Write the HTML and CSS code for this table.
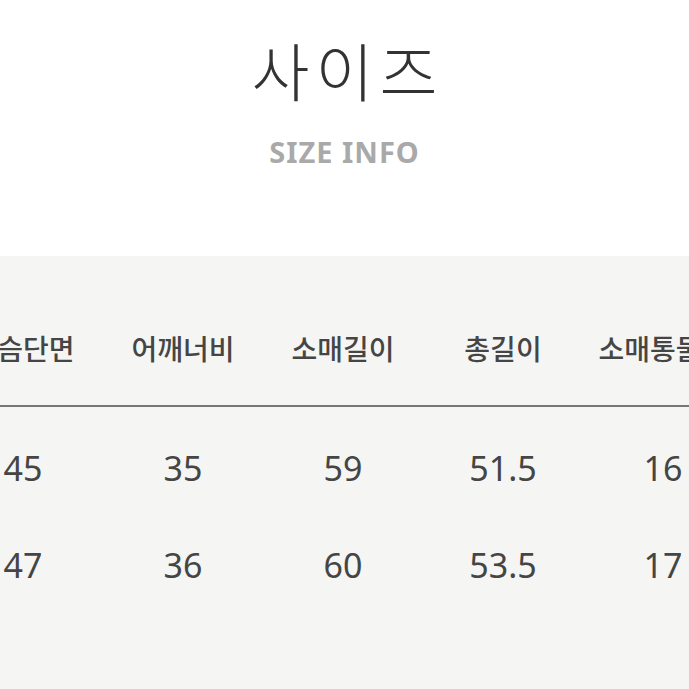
FILE: index.html
```html
<!DOCTYPE html>
<html lang="ko">
<head>
<meta charset="utf-8">
<link rel="stylesheet" href="styles.css">
</head>
<body>
<div class="page">
  <header class="head">
    <h1 class="title">사이즈</h1>
    <p class="sub">SIZE INFO</p>
  </header>
  <section class="panel">
    <div class="table">
      <div class="row hdr">
        <div class="cell">사이즈</div>
        <div class="cell">가슴단면</div>
        <div class="cell">어깨너비</div>
        <div class="cell">소매길이</div>
        <div class="cell">총길이</div>
        <div class="cell">소매통둘레</div>
      </div>
      <div class="row num r1">
        <div class="cell">S</div>
        <div class="cell">45</div>
        <div class="cell">35</div>
        <div class="cell">59</div>
        <div class="cell">51.5</div>
        <div class="cell">16</div>
      </div>
      <div class="row num r2">
        <div class="cell">M</div>
        <div class="cell">47</div>
        <div class="cell">36</div>
        <div class="cell">60</div>
        <div class="cell">53.5</div>
        <div class="cell">17</div>
      </div>
    </div>
  </section>
</div>
</body>
</html>
```

FILE: styles.css
```css
html, body {
  margin: 0;
  padding: 0;
  background: #ffffff;
}
body {
  width: 689px;
  height: 689px;
  overflow: hidden;
  font-family: "Noto Sans CJK KR", "Noto Sans", sans-serif;
}
.page {
  display: flex;
  flex-direction: column;
  height: 689px;
}
.head {
  display: flex;
  flex-direction: column;
  align-items: center;
  padding-top: 27px;
  height: 222px;
  box-sizing: border-box;
}
.title {
  margin: 0;
  padding-left: 6px;
  font-family: "Noto Sans CJK KR", sans-serif;
  font-weight: 300;
  font-size: 63px;
  line-height: 84px;
  color: #333333;
  letter-spacing: 6px;
}
.sub {
  margin: 24px 0 0;
  font-family: "Noto Sans", "Open Sans", sans-serif;
  font-weight: 700;
  font-size: 29px;
  line-height: 34px;
  color: #a9a9a9;
  letter-spacing: 1px;
}
.panel {
  margin-top: 34px;
  flex: 1;
  background: #f5f5f4;
  overflow: hidden;
}
.table {
  margin-left: -217px;
  width: 960px;
  display: flex;
  flex-direction: column;
}
.row {
  display: flex;
}
.cell {
  width: 160px;
  flex: none;
  text-align: center;
  color: #454545;
}
.hdr {
  height: 151px;
  align-items: center;
  padding-top: 34px;
  box-sizing: border-box;
  border-bottom: 2px solid #777777;
}
.hdr .cell {
  font-family: "Noto Sans CJK KR", sans-serif;
  font-weight: 500;
  font-size: 28px;
  line-height: 40px;
}
.num .cell {
  font-family: "Noto Sans", sans-serif;
  font-weight: 400;
  font-size: 34px;
  line-height: 40px;
}
.r1 {
  padding-top: 41px;
}
.r2 {
  padding-top: 57px;
}
```
